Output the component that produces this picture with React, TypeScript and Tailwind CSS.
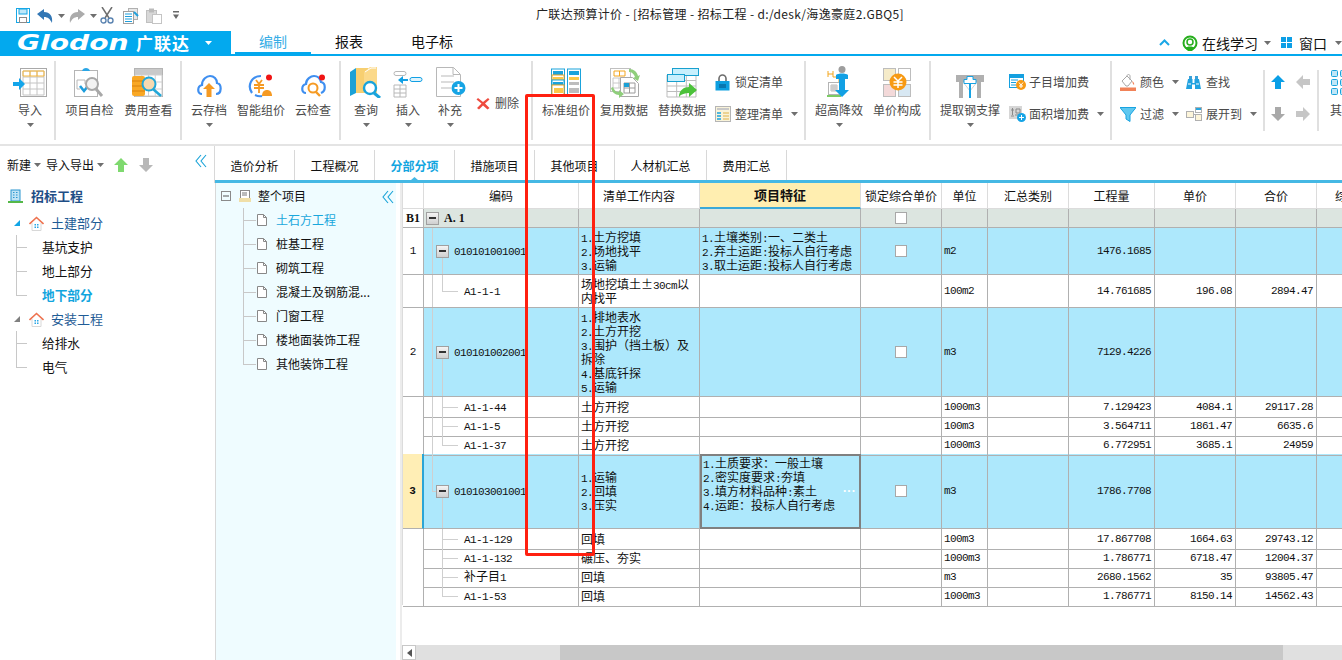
import type { ReactNode } from "react";

function Caret({ color = "#6f6f6f" }: { color?: string }) {
  return (
    <svg width="7" height="4" viewBox="0 0 7 4" className="shrink-0">
      <path d="M0 0h7L3.5 4z" fill={color} />
    </svg>
  );
}

function Icon({ w, h, children }: { w: number; h: number; children: ReactNode }) {
  return (
    <svg width={w} height={h} viewBox={`0 0 ${w} ${h}`} className="shrink-0" fill="none">
      {children}
    </svg>
  );
}

function GridLines({ x, y, w, h, nx, ny, color = "#b4b4b4" }: { x: number; y: number; w: number; h: number; nx: number; ny: number; color?: string }) {
  const v = Array.from({ length: nx + 1 }, (_, i) => x + (w * i) / nx);
  const t = Array.from({ length: ny + 1 }, (_, i) => y + (h * i) / ny);
  return (
    <g stroke={color} strokeWidth="1">
      {v.map((a) => <path key={"v" + a} d={`M${a} ${y}V${y + h}`} />)}
      {t.map((a) => <path key={"h" + a} d={`M${x} ${a}H${x + w}`} />)}
    </g>
  );
}

function Arrow({ dir, color }: { dir: "up" | "down" | "left" | "right"; color: string }) {
  const rot = { up: 0, right: 90, down: 180, left: 270 }[dir];
  return (
    <svg width="16" height="16" viewBox="0 0 16 16" className="shrink-0">
      <path d="M8 1l7 7h-4v7H5V8H1z" fill={color} transform={`rotate(${rot} 8 8)`} />
    </svg>
  );
}

const icons = {
  importFile: (
    <Icon w={34} h={31}>
      <rect x="7.5" y="1.5" width="26" height="28" fill="#fff" stroke="#a9a9a9" />
      <GridLines x={10} y={4} w={21} h={24} nx={3} ny={4} color="#c4c4c4" />
      <GridLines x={10} y={4} w={21} h={5} nx={3} ny={1} color="#f6b73c" />
      <path d="M0 15h6v-4l6 6-6 6v-4H0z" fill="#13a5ea" />
    </Icon>
  ),
  check: (
    <Icon w={33} h={31}>
      <rect x="1.5" y="3.5" width="23" height="26" stroke="#b5b5b5" fill="#fff" />
      <path d="M9 4c1-4 7-4 8 0z" fill="#2aa6e6" />
      <path d="M4 13h8v4M4 13v9h3" stroke="#b8b8b8" />
      <path d="M7 19l4 5 8-10" stroke="#1c9ddc" strokeWidth="2.6" />
      <circle cx="19" cy="17" r="6" stroke="#a8a8a8" strokeWidth="2" fill="#f2f2f2" />
      <path d="M23 22l6 7" stroke="#a8a8a8" strokeWidth="3" />
    </Icon>
  ),
  fee: (
    <Icon w={33} h={31}>
      <rect x="2.5" y="1.5" width="28" height="28" fill="#fff" stroke="#b4b4b4" />
      <rect x="3" y="2" width="27" height="6" fill="#c9c9c9" />
      <GridLines x={3} y={8} w={27} h={21} nx={4} ny={3} color="#cfcfcf" />
      <rect x="0" y="9" width="13" height="20" rx="2" fill="#f9a825" />
      <path d="M0 14h13M0 19h13M0 24h13" stroke="#d9820f" />
      <circle cx="17" cy="17" r="6.5" fill="#f6d9b0" stroke="#22a7d8" strokeWidth="2" />
      <path d="M21 22l8 7" stroke="#22a7d8" strokeWidth="2.5" />
    </Icon>
  ),
  cloudUp: (
    <Icon w={26} h={24}>
      <path d="M6 20C1 20 1 12 6 11 6 5 11 2 14 2c4 0 7 3 7 7 5 1 5 11-1 11" stroke="#3f8ff0" strokeWidth="2.2" />
      <path d="M13 9l6 6h-3.5v8h-5v-8H7z" fill="#f59a23" />
    </Icon>
  ),
  smart: (
    <Icon w={26} h={24}>
      <path d="M4 19C-1 12 3 2 13 2" stroke="#3f8ff0" strokeWidth="2.2" />
      <path d="M7 21c2 1 4 2 7 1" stroke="#3f8ff0" strokeWidth="2" />
      <path d="M8 6l3 4 3-4M6 11h10M6 14h10M11 10v9" stroke="#f59a23" strokeWidth="1.8" />
      <path d="M14 22c0-4 2-6 5-6s5 2 5 6z" fill="#f59a23" />
      <circle cx="21" cy="3.5" r="3" fill="#f01414" />
    </Icon>
  ),
  cloudCheck: (
    <Icon w={26} h={24}>
      <path d="M6 19C1 19 1 11 6 10 6 5 11 2 14 2c4 0 6 2 7 6 5 1 5 9 0 11" stroke="#3f8ff0" strokeWidth="2.2" />
      <circle cx="13" cy="14" r="4.5" stroke="#f59a23" strokeWidth="2" />
      <path d="M16 18l4 4" stroke="#f59a23" strokeWidth="2.4" />
      <circle cx="22" cy="3.5" r="3" fill="#f01414" />
    </Icon>
  ),
  query: (
    <Icon w={32} h={32}>
      <path d="M0 6l6-4v25l-6 3z" fill="#1ba1d6" />
      <path d="M6 2h12v25H6z" fill="#f7cf71" />
      <path d="M14 6l6-5h7v26H14z" fill="#fbd98a" />
      <path d="M15 6l6-4h5" stroke="#fff" />
      <circle cx="20" cy="22" r="6" fill="#fff" stroke="#18a3dc" strokeWidth="2.4" />
      <path d="M24 27l6 5" stroke="#18a3dc" strokeWidth="3" />
    </Icon>
  ),
  insert: (
    <Icon w={30} h={28}>
      <rect x="1" y="1.5" width="12" height="4" rx="2" stroke="#b8b8b8" />
      <path d="M5 10l5-4v3h5v2h-5v3z" fill="#12a0e4" />
      <rect x="17" y="7.5" width="12" height="4" rx="2" stroke="#12a0e4" fill="#dff4fd" />
      <GridLines x={1} y={15} w={12} h={12} nx={2} ny={3} color="#b8b8b8" />
    </Icon>
  ),
  add: (
    <Icon w={31} h={32}>
      <path d="M1.5 1.5h17l7 7v22h-24z" fill="#fff" stroke="#b8b8b8" />
      <path d="M6 10h13M6 16h13M6 22h10" stroke="#dcdcdc" strokeWidth="2" />
      <path d="M18 1.5v7h7" stroke="#b8b8b8" />
      <circle cx="23.5" cy="22" r="7" fill="#16a4e4" />
      <path d="M23.5 18v8M19.5 22h8" stroke="#fff" strokeWidth="2" />
    </Icon>
  ),
  del: (
    <Icon w={14} h={13}>
      <path d="M2 1l5 4 5-4 1.500 1.500-4.500 4 4.500 4.500-2 1.500-4.500-4-4 4-2-1.500 4.500-4.500L.5 2.500z" fill="#ee4b3f" />
    </Icon>
  ),
  standard: (
    <Icon w={32} h={30}>
      <rect x="1.500" y="1" width="13" height="27" fill="#fff" stroke="#1aa3dc" />
      <rect x="3" y="3" width="10" height="4" fill="#1aa3dc" />
      <rect x="2" y="7" width="12" height="5" fill="#fff" stroke="#f3a61f" />
      <rect x="3" y="9" width="10" height="3" fill="#fbc94a" />
      <rect x="2" y="12" width="12" height="5" fill="#fff" stroke="#1aa3dc" />
      <rect x="3" y="14" width="10" height="3" fill="#1aa3dc" />
      <rect x="2" y="17" width="12" height="11" fill="#fff" stroke="#f3a61f" />
      <rect x="4" y="20" width="9" height="5" fill="#fbc94a" />
      <rect x="17.500" y="1" width="13" height="27" fill="#fff" stroke="#1aa3dc" />
      <rect x="19" y="3" width="10" height="4" fill="#1aa3dc" />
      <rect x="19" y="9" width="10" height="3" fill="#fbc94a" />
      <rect x="19" y="14" width="10" height="3" fill="#bdbdbd" />
      <rect x="19" y="20" width="10" height="5" fill="#bdbdbd" />
    </Icon>
  ),
  reuse: (
    <Icon w={31} h={31}>
      <rect x="1.500" y="1.500" width="20" height="23" fill="#fff" stroke="#c0c0c0" />
      <GridLines x={5} y={4} w={11} h={5} nx={2} ny={1} color="#f3a61f" />
      <GridLines x={4} y={11} w={12} h={10} nx={2} ny={2} color="#c8c8c8" />
      <path d="M11.500 10.500h12l6 6v13h-18z" fill="#fff" stroke="#a8a8a8" />
      <GridLines x={15} y={16} w={11} h={10} nx={2} ny={2} color="#9a9a9a" />
      <rect x="15" y="16" width="5" height="4" fill="#1ba1d6" />
      <path d="M20 2c5 0 8 3 9 7l2-1-2 6-5-3 2-1c-1-3-3-5-6-5z" fill="#8fce7b" />
      <path d="M2 21c1 4 4 7 8 7v3l5-4-5-4v2c-3 0-5-2-6-5z" fill="#8fce7b" />
    </Icon>
  ),
  replace: (
    <Icon w={33} h={31}>
      <GridLines x={1} y={8} w={29} h={22} nx={3} ny={4} color="#bdbdbd" />
      <rect x="6.500" y="1.500" width="26" height="7" fill="#c8f0fd" stroke="#18a0cf" />
      <rect x="1.500" y="7.500" width="17" height="7" fill="#c8f0fd" stroke="#18a0cf" />
      <path d="M13 30c0-7 5-10 10-10v-4l8 7-8 7v-4c-4 0-8 1-10 4z" fill="#4cc23a" />
    </Icon>
  ),
  lock: (
    <Icon w={15} h={17}>
      <path d="M4 7V4.500a3.500 3.500 0 0 1 7 0V7" stroke="#6d6d6d" strokeWidth="1.600" />
      <rect x="0.500" y="7" width="14" height="9.500" fill="#0d9fe0" />
      <path d="M4 11h7M4 13h7" stroke="#074f80" />
    </Icon>
  ),
  arrange: (
    <Icon w={16} h={16}>
      <rect x="0.500" y="0.500" width="15" height="15" fill="#f9f3d9" stroke="#b5b5b5" />
      <path d="M2 3h12" stroke="#c8c8c8" strokeWidth="2" />
      <path d="M2 7h4M2 10h4M2 13h4" stroke="#19a3e0" strokeWidth="1.500" />
      <path d="M8 7h6M8 10h6M8 13h6" stroke="#e8c97a" strokeWidth="1.500" />
    </Icon>
  ),
  raise: (
    <Icon w={24} h={32}>
      <path d="M1 5v6M1 8h5M6 5v6" stroke="#f3a61f" />
      <path d="M6 11h6v20" stroke="#f3a61f" />
      <rect x="1.500" y="16.500" width="11" height="12" fill="#fff" stroke="#b4b4b4" />
      <GridLines x={4} y={19} w={6} h={6} nx={3} ny={3} color="#bbb" />
      <rect x="0" y="29" width="14" height="2" fill="#7ccb65" />
      <circle cx="15" cy="3.500" r="3.500" fill="#9d9d9d" />
      <path d="M9 9c2-2 10-2 12 0v4h-3v4h-6v-4H9z" fill="#12a0e4" />
      <path d="M12 17h6v7h4l-7 7-7-7h4z" fill="#12a0e4" />
    </Icon>
  ),
  unit: (
    <Icon w={31} h={31}>
      <rect x="1.500" y="1.500" width="12" height="12" fill="#f5ebc9" stroke="#bdbdbd" />
      <rect x="16.500" y="1.500" width="12" height="12" fill="#fff" stroke="#bdbdbd" />
      <rect x="1.500" y="17.500" width="12" height="12" fill="#f3d9d9" stroke="#bdbdbd" />
      <rect x="16.500" y="17.500" width="12" height="12" fill="#d8e8f3" stroke="#bdbdbd" />
      <circle cx="16" cy="15" r="8.500" fill="#f79a14" />
      <path d="M12 10l4 4 4-4M11.500 15h9M11.500 18h9M16 14v7" stroke="#fff" strokeWidth="1.500" />
    </Icon>
  ),
  steel: (
    <Icon w={28} h={23}>
      <path d="M0 0h28v7h-3v16h-4V7h-3zM0 0h10v7H7v16H3V7H0z" fill="#b0b0b0" />
      <rect x="7" y="0" width="14" height="7" fill="#b0b0b0" />
      <path d="M7 7l7 9 7-9" stroke="#d4d4d4" />
      <path d="M14 8v15" stroke="#17a3e4" strokeWidth="2" />
      <path d="M11 1.500h6v3h3v4H8v-4h3z" fill="#fff" stroke="#17a3e4" />
    </Icon>
  ),
  subFee: (
    <Icon w={17} h={16}>
      <rect x="0.500" y="0.500" width="14" height="13" fill="#fff" stroke="#14a0e0" />
      <rect x="1" y="1" width="13" height="3" fill="#14a0e0" />
      <path d="M2 6h7M2 8.500h5M2 11h5" stroke="#14a0e0" />
      <circle cx="12" cy="11" r="5" fill="#f79a14" />
      <path d="M10 8.500l2 2.500 2-2.500M10 12h4M12 11v3" stroke="#fff" />
    </Icon>
  ),
  areaFee: (
    <Icon w={17} h={16}>
      <rect x="0" y="0" width="13" height="13" fill="#d6d6d6" />
      <path d="M2 4h3M3.500 2v7M2 10h3M7 3h4v4H7zM6 9h6" stroke="#8a8a8a" />
      <circle cx="12.500" cy="11.500" r="4.500" fill="#15a4e6" />
      <path d="M12.500 9v5M10 11.500h5" stroke="#fff" />
    </Icon>
  ),
  paint: (
    <Icon w={16} h={17}>
      <path d="M2 7l5-5 5 5-4 5H6z" fill="#fff" stroke="#a8a8a8" />
      <path d="M7 2c0-2 3-2 3 0v4" stroke="#a8a8a8" />
      <path d="M12 7c2 1 2.500 3 2 4l-1-1z" fill="#f18258" />
      <rect x="0" y="13.500" width="16" height="3.500" fill="#f18258" />
    </Icon>
  ),
  binoculars: (
    <Icon w={15} h={15}>
      <path d="M3 1h3v3H3zM9 1h3v3H9z" fill="#3aa0d8" />
      <path d="M2 4h4.500v4h2V4H13l2 10H9V9.500H6V14H0z" fill="#21a2e0" />
      <path d="M2 9h3M10 9h3" stroke="#fff" />
    </Icon>
  ),
  filter: (
    <Icon w={16} h={15}>
      <path d="M0 .5h16L10 8v6.500l-4-2.500V8z" fill="#5ec8f0" stroke="#18a3e0" />
    </Icon>
  ),
  expand: (
    <Icon w={16} h={15}>
      <rect x="0.500" y="4.500" width="7" height="6" fill="#fdf5da" stroke="#b0b0b0" />
      <rect x="9.500" y="0.500" width="6" height="5" fill="#fff" stroke="#b0b0b0" />
      <rect x="10" y="1" width="5" height="2" fill="#25a7e0" />
      <rect x="9.500" y="7.500" width="6" height="6" fill="#fdf5da" stroke="#b0b0b0" />
      <path d="M7.500 7.500h2" stroke="#b0b0b0" />
    </Icon>
  ),
  others: (
    <Icon w={30} h={26}>
      {[1, 10, 19].map((y) =>
        [1, 10, 19].map((x) => (
          <rect key={x + "-" + y} x={x + 0.5} y={y + 0.5} width="6" height="6" rx="1" fill="#bfe6f7" stroke="#19a3dc" />
        )),
      )}
    </Icon>
  ),
};

function LargeBtn({ label, icon, w, caret }: { label: string; icon: ReactNode; w: string; caret?: boolean }) {
  return (
    <div className={`flex flex-col items-center shrink-0 ${w}`}>
      <div className="h-[34px] flex items-end justify-center">{icon}</div>
      <div className="mt-[5px] text-[12px] leading-[14px] whitespace-nowrap text-[#4a4a4a]">{label}</div>
      {caret && <div className="mt-[6px] flex"><Caret /></div>}
    </div>
  );
}

function SmallBtn({ label, icon, caret, iconW }: { label: string; icon: ReactNode; caret?: boolean; iconW: string }) {
  return (
    <div className="flex items-center h-[18px]">
      <div className={`flex items-center justify-start shrink-0 ${iconW}`}>{icon}</div>
      <div className="text-[12px] leading-[14px] whitespace-nowrap text-[#4a4a4a]">{label}</div>
      {caret && <div className="ml-[8px] flex"><Caret /></div>}
    </div>
  );
}

function Group({ className, children }: { className: string; children: ReactNode }) {
  return (
    <div className={`h-[79px] mt-[5px] flex shrink-0 border-r-2 border-[#e0e0e0] ${className}`}>
      {children}
    </div>
  );
}

function Ribbon() {
  return (
    <div className="h-[90px] flex overflow-hidden border-b-2 border-[#e4e4e4] shrink-0">
      <Group className="w-[56px] pt-[3px]">
        <LargeBtn label="导入" icon={icons.importFile} w="w-[60px]" caret />
      </Group>
      <Group className="w-[126px] pt-[3px] pl-[4px]">
        <LargeBtn label="项目自检" icon={icons.check} w="w-[59px]" />
        <LargeBtn label="费用查看" icon={icons.fee} w="w-[59px]" />
      </Group>
      <Group className="w-[159px] pt-[3px] pl-[1px]">
        <LargeBtn label="云存档" icon={icons.cloudUp} w="w-[52px]" caret />
        <LargeBtn label="智能组价" icon={icons.smart} w="w-[52px]" />
        <LargeBtn label="云检查" icon={icons.cloudCheck} w="w-[52px]" />
      </Group>
      <Group className="w-[192px] pt-[3px] pl-[4px]">
        <LargeBtn label="查询" icon={icons.query} w="w-[42px]" caret />
        <LargeBtn label="插入" icon={icons.insert} w="w-[42px]" caret />
        <LargeBtn label="补充" icon={icons.add} w="w-[42px]" caret />
        <div className="flex items-center gap-[5px] h-[18px] mt-[30px] ml-[5px]">
          {icons.del}
          <span className="text-[12px] leading-[14px] text-[#4a4a4a] whitespace-nowrap">删除</span>
        </div>
      </Group>
      <Group className="w-[273px] pt-[3px] pl-[4px]">
        <LargeBtn label="标准组价" icon={icons.standard} w="w-[58px]" />
        <LargeBtn label="复用数据" icon={icons.reuse} w="w-[58px]" />
        <LargeBtn label="替换数据" icon={icons.replace} w="w-[58px]" />
        <div className="flex flex-col gap-[14px] ml-[4px] pt-[9px]">
          <SmallBtn label="锁定清单" icon={icons.lock} iconW="w-[20px]" />
          <SmallBtn label="整理清单" icon={icons.arrange} iconW="w-[20px]" caret />
        </div>
      </Group>
      <Group className="w-[125px] pt-[3px] pl-[4px]">
        <LargeBtn label="超高降效" icon={icons.raise} w="w-[58px]" caret />
        <LargeBtn label="单价构成" icon={icons.unit} w="w-[58px]" />
      </Group>
      <Group className="w-[181px] pt-[3px] pl-[6px]">
        <LargeBtn label="提取钢支撑" icon={icons.steel} w="w-[66px]" caret />
        <div className="flex flex-col gap-[14px] ml-[6px] pt-[9px]">
          <SmallBtn label="子目增加费" icon={icons.subFee} iconW="w-[20px]" />
          <SmallBtn label="面积增加费" icon={icons.areaFee} iconW="w-[20px]" caret />
        </div>
      </Group>
      <div className="w-[151px] h-[79px] mt-[5px] shrink-0 flex flex-col gap-[14px] pl-[8px] pt-[12px]">
        <div className="flex">
          <div className="w-[66px]"><SmallBtn label="颜色" icon={icons.paint} iconW="w-[20px]" caret /></div>
          <SmallBtn label="查找" icon={icons.binoculars} iconW="w-[20px]" />
        </div>
        <div className="flex">
          <div className="w-[66px]"><SmallBtn label="过滤" icon={icons.filter} iconW="w-[20px]" caret /></div>
          <SmallBtn label="展开到" icon={icons.expand} iconW="w-[20px]" caret />
        </div>
      </div>
      <div className="w-[56px] h-[61px] mt-[14px] shrink-0 border-l-2 border-r-2 border-[#e0e0e0] grid grid-cols-[16px_16px] content-start gap-x-[9px] gap-y-[16px] pl-[5px] pt-[4px]">
        <Arrow dir="up" color="#0a9fe6" />
        <Arrow dir="left" color="#c6c6c6" />
        <Arrow dir="down" color="#a9a9a9" />
        <Arrow dir="right" color="#c6c6c6" />
      </div>
      <div className="shrink-0 pl-[11px] pt-[13px] flex flex-col">
        {icons.others}
        <div className="mt-[8px] text-[12px] leading-[14px] text-[#4a4a4a] whitespace-nowrap">其他</div>
      </div>
    </div>
  );
}

function TitleBar() {
  return (
    <div className="h-[31px] flex items-center shrink-0">
      <div className="w-[536px] shrink-0 flex items-center pl-[16px] h-full">
        <svg width="14" height="15" viewBox="0 0 14 15" className="shrink-0" fill="none">
          <rect x="0.500" y="0.500" width="13" height="14" stroke="#17a7e6" />
          <rect x="3" y="1" width="8" height="5" fill="#bfe8f9" stroke="#17a7e6" />
          <rect x="3.500" y="9.500" width="7" height="5" stroke="#8a8a8a" />
        </svg>
        <svg width="16" height="14" viewBox="0 0 16 14" className="ml-[7px] shrink-0">
          <path d="M0 5l7-5v3c6 0 9 4 8 11-2-4-4-6-8-6v3z" fill="#3277b5" />
        </svg>
        <div className="ml-[5px]"><Caret /></div>
        <svg width="16" height="14" viewBox="0 0 16 14" className="ml-[4px] shrink-0">
          <path d="M16 5L9 0v3C3 3 0 7 1 14c2-4 4-6 8-6v3z" fill="#ababab" />
        </svg>
        <div className="ml-[5px]"><Caret /></div>
        <svg width="14" height="17" viewBox="0 0 14 17" className="ml-[3px] shrink-0" fill="none">
          <path d="M2 0l7 11M12 0L5 11" stroke="#6f6f6f" strokeWidth="1.500" />
          <circle cx="3.500" cy="13.500" r="2.500" stroke="#5b84b1" strokeWidth="1.400" />
          <circle cx="10.500" cy="13.500" r="2.500" stroke="#5b84b1" strokeWidth="1.400" />
        </svg>
        <svg width="16" height="16" viewBox="0 0 16 16" className="ml-[9px] shrink-0" fill="none">
          <rect x="5.500" y="0.500" width="9" height="11" fill="#e8e8e8" stroke="#b0b0b0" />
          <rect x="0.500" y="3.500" width="10" height="12" fill="#fff" stroke="#a0a0a0" />
          <path d="M2 6h7M2 8.500h7M2 11h7M2 13.500h7" stroke="#1e9fdc" />
          <path d="M11 4l4 4" stroke="#1e9fdc" strokeWidth="2" />
        </svg>
        <svg width="16" height="16" viewBox="0 0 16 16" className="ml-[7px] shrink-0" fill="none">
          <rect x="0.500" y="2.500" width="10" height="12" fill="#d8d8d8" stroke="#c0c0c0" />
          <rect x="3" y="0.500" width="5" height="4" fill="#bbb" />
          <rect x="6.500" y="6.500" width="9" height="9" fill="#fff" stroke="#c4c4c4" />
        </svg>
        <svg width="6" height="9" viewBox="0 0 6 9" className="ml-[11px] shrink-0">
          <path d="M0 0h6v1.500H0zM0 3.500h6L3 8z" fill="#6a6a6a" />
        </svg>
      </div>
      <div className="text-[12px] leading-[14px] whitespace-nowrap text-[#222] -mt-[3px] tracking-[0.35px]">
        广联达预算计价 - [招标管理 - 招标工程 - d:/desk/海逸豪庭2.GBQ5]
      </div>
    </div>
  );
}

function MenuBar() {
  return (
    <div className="h-[25px] flex shrink-0 border-b-2 border-[#03a9ee]">
      <div className="w-[231px] h-[24px] shrink-0 flex items-center bg-[#03a9ee] pl-[17px] text-white">
        <span className="w-[119px] shrink-0">
          <span className="inline-block origin-left scale-x-[1.28] [font-family:'DejaVu_Sans',sans-serif] italic font-bold text-[22px] leading-[24px]">Glodon</span>
        </span>
        <span className="text-[17px] leading-[24px] font-bold w-[69px] tracking-[1px] whitespace-nowrap">广联达</span>
        <Caret color="#ffffff" />
      </div>
      <div className="ml-[4px] w-[76px] h-[23px] border-b-[2px] border-[#03a9ee] text-center text-[14px] leading-[21px] text-[#36ade6]">编制</div>
      <div className="w-[76px] h-[23px] text-center text-[14px] leading-[21px] text-[#111]">报表</div>
      <div className="w-[90px] h-[23px] text-center text-[14px] leading-[21px] text-[#111]">电子标</div>
      <div className="ml-auto flex items-center h-[23px]">
        <svg width="11" height="7" viewBox="0 0 11 7" fill="none"><path d="M1 6l4.500-4.500L10 6" stroke="#1aa7e6" strokeWidth="2" /></svg>
        <svg width="16" height="16" viewBox="0 0 16 16" className="ml-[12px]" fill="none">
          <circle cx="8" cy="8" r="6.500" stroke="#27ae1d" strokeWidth="2" />
          <circle cx="8" cy="7" r="3" stroke="#27ae1d" strokeWidth="1.500" />
          <path d="M3 13c2-2 8-2 10 0l-3 3H6z" fill="#27ae1d" />
        </svg>
        <span className="ml-[4px] text-[14px] leading-[16px] text-[#111] whitespace-nowrap w-[62px]">在线学习</span>
        <Caret />
        <svg width="11" height="11" viewBox="0 0 11 11" className="ml-[10px]">
          <path d="M0 0h5v5H0zM6 0h5v5H6zM0 6h5v5H0zM6 6h5v5H6z" fill="#0d9fe6" />
        </svg>
        <span className="ml-[7px] text-[14px] leading-[16px] text-[#111] whitespace-nowrap w-[36px]">窗口</span>
        <Caret />
      </div>
    </div>
  );
}

function CollapseIcon({ color = "#18a3d8" }: { color?: string }) {
  return (
    <svg width="12" height="14" viewBox="0 0 12 14" fill="none">
      <path d="M6 1L1 7l5 6M11 1L6 7l5 6" stroke={color} strokeWidth="1.100" />
    </svg>
  );
}

const tabs = [
  { name: "造价分析", w: "w-[80px]" },
  { name: "工程概况", w: "w-[80px]" },
  { name: "分部分项", w: "w-[80px]", active: true },
  { name: "措施项目", w: "w-[80px]" },
  { name: "其他项目", w: "w-[80px]" },
  { name: "人材机汇总", w: "w-[92px]" },
  { name: "费用汇总", w: "w-[80px]" },
];

function TabBar() {
  return (
    <div className="h-[37px] flex shrink-0 border-b-[3px] border-[#45b8e4]">
      <div className="w-[215px] shrink-0 flex items-center pl-[7px] text-[12px] text-[#111] border-r border-[#d8d8d8] -mb-[3px] bg-white">
        <span>新建</span>
        <span className="ml-[3px]"><Caret /></span>
        <span className="ml-[5px]">导入导出</span>
        <span className="ml-[3px]"><Caret /></span>
        <span className="ml-[9px]"><Arrow dir="up" color="#7fd96f" /></span>
        <span className="ml-[9px]"><Arrow dir="down" color="#b8b8b8" /></span>
        <span className="ml-auto mr-[7px] -mt-[7px]"><CollapseIcon /></span>
      </div>
      {tabs.map((t) => (
        <div
          key={t.name}
          className={`${t.w} shrink-0 relative mt-[4px] pt-[9px] text-center text-[12px] leading-[14px] border-r border-[#d8d8d8] ${t.active ? "font-bold text-[#12a5e0]" : "text-[#111]"}`}
        >
          {t.name}
          {t.active && (
            <span className="absolute left-[36px] bottom-0 flex">
              <svg width="7" height="3" viewBox="0 0 7 3"><path d="M0 3l3.500-3L7 3z" fill="#45b8e4" /></svg>
            </span>
          )}
        </div>
      ))}
    </div>
  );
}

function House() {
  return (
    <svg width="15" height="15" viewBox="0 0 15 15" fill="none" className="shrink-0">
      <path d="M3 7v7.500h9V7" fill="#fff" stroke="#d8d8d8" />
      <path d="M.5 8L7.500 1.500 14.500 8" stroke="#ee7350" strokeWidth="1.600" />
      <path d="M5.500 8h1.500v1.500H5.500zM8 8h1.500v1.500H8zM5.500 10.500h1.500V12H5.500zM8 10.500h1.500V12H8z" fill="#2aa7e6" />
    </svg>
  );
}

function LeftLeaf({ label, last, active }: { label: string; last?: boolean; active?: boolean }) {
  return (
    <div className="relative h-[24px] flex items-center pl-[42px]">
      <span className={`absolute left-[16px] top-0 w-px bg-[#c8c8c8] ${last ? "h-[12px]" : "h-[24px]"}`} />
      <span className="absolute left-[16px] top-[12px] w-[11px] h-px bg-[#c8c8c8]" />
      <span className={`text-[12.700px] leading-[16px] ${active ? "font-bold text-[#12a5de]" : "text-[#111]"}`}>{label}</span>
    </div>
  );
}

function LeftGroup({ label, open }: { label: string; open?: boolean }) {
  return (
    <div className="h-[24px] flex items-center pl-[14px]">
      <svg width="6" height="6" viewBox="0 0 6 6" className="shrink-0"><path d="M6 0v6H0z" fill={open ? "#12a5e6" : "#808080"} /></svg>
      <span className="ml-[9px]"><House /></span>
      <span className="ml-[7px] text-[13px] leading-[16px] text-[#1f5c96]">{label}</span>
    </div>
  );
}

function LeftPanel() {
  return (
    <div className="w-[216px] shrink-0 border-r border-[#d8d8d8]">
      <div className="h-[24px] flex items-center pl-[8px] mt-px">
        <svg width="15" height="14" viewBox="0 0 15 14" className="shrink-0">
          <rect x="3" y="1" width="9" height="11" fill="#bfe3f5" stroke="#2b96d0" />
          <path d="M5 3.500h1.500M8 3.500h1.500M5 6h1.500M8 6h1.500M5 8.500h1.500M8 8.500h1.500" stroke="#2b96d0" />
          <rect x="0" y="12" width="15" height="2" fill="#55b848" />
        </svg>
        <span className="ml-[8px] text-[13px] leading-[16px] font-bold text-[#1f4e86]">招标工程</span>
      </div>
      <div className="h-[3px]" />
      <LeftGroup label="土建部分" open />
      <LeftLeaf label="基坑支护" />
      <LeftLeaf label="地上部分" />
      <LeftLeaf label="地下部分" last active />
      <LeftGroup label="安装工程" />
      <LeftLeaf label="给排水" />
      <LeftLeaf label="电气" last />
    </div>
  );
}

const sections = ["土石方工程", "桩基工程", "砌筑工程", "混凝土及钢筋混...", "门窗工程", "楼地面装饰工程", "其他装饰工程"];

function MidPanel() {
  return (
    <div className="w-[184px] shrink-0 relative">
      <div className="w-[180px] h-full bg-[#effcff] pt-px">
        <div className="h-[24px] flex items-center pl-[5px]">
          <svg width="10" height="10" viewBox="0 0 10 10" fill="none" className="shrink-0">
            <rect x="0.500" y="0.500" width="9" height="9" stroke="#8a8a8a" />
            <path d="M2 5h6" stroke="#555" />
          </svg>
          <svg width="12" height="12" viewBox="0 0 12 12" fill="none" className="ml-[8px] shrink-0">
            <rect x="1.500" y="0.500" width="9" height="9" fill="#fff" stroke="#8a8a8a" />
            <path d="M3 3h5M3 5h5" stroke="#777" />
            <rect x="0" y="8" width="12" height="4" fill="#f0dfa8" />
          </svg>
          <span className="ml-[7px] text-[12px] leading-[14px] text-[#111]">整个项目</span>
        </div>
        {sections.map((name, i) => (
          <div key={name} className="relative h-[24px] flex items-center pl-[60px]">
            <span className={`absolute left-[27px] top-0 w-px bg-[#c8c8c8] ${i === sections.length - 1 ? "h-[12px]" : "h-[24px]"}`} />
            <span className="absolute left-[27px] top-[12px] w-[13px] h-px bg-[#c8c8c8]" />
            <svg width="10" height="12" viewBox="0 0 10 12" fill="none" className="absolute left-[41px] top-[6px]">
              <path d="M.5.500h6l3 3v8h-9z" fill="#fff" stroke="#888" />
              <path d="M6.500.500v3h3" stroke="#888" />
            </svg>
            <span className={`text-[12px] leading-[14px] whitespace-nowrap ${i === 0 ? "text-[#1aa7dc]" : "text-[#111]"}`}>{name}</span>
          </div>
        ))}
      </div>
      <span className="absolute right-[6px] top-[7px] flex"><CollapseIcon /></span>
    </div>
  );
}

const gridCols = "grid grid-cols-[21px_155px_121px_161px_81px_46px_81px_86px_81px_81px_81px]";
const cellLine = "border-r border-b border-[#b0b0b0]";
const headLine = "border-r border-[#dcdcdc] border-b border-b-[#dcdcdc]";
const headers = ["", "编码", "清单工作内容", "项目特征", "锁定综合单价", "单位", "汇总类别", "工程量", "单价", "合价"];

// ASCII runs are half width in the reference, so they get a narrow mono face next to the 12px CJK glyphs
function Txt({ s }: { s: string }) {
  const parts = s.split(/([\x21-\x7e ]+)/);
  return (
    <>
      {parts.map((p, i) =>
        i % 2 === 1 ? (
          <span key={i} className="[font-family:'Liberation_Mono',monospace] text-[11px] tracking-[-0.6px]">{p}</span>
        ) : (
          <span key={i}>{p}</span>
        ),
      )}
    </>
  );
}

function Lines({ items }: { items: string[] }) {
  return (
    <div className="leading-[14px] whitespace-nowrap">
      {items.map((l) => (
        <div key={l} className="h-[14px]"><Txt s={l} /></div>
      ))}
    </div>
  );
}

type Row = {
  h: string;
  kind: "parent" | "child";
  no?: string;
  code: string;
  work: string[];
  feature?: string[];
  unit: string;
  qty: string;
  price?: string;
  total?: string;
  outer?: "full" | "half" | "none";
  inner?: "full" | "half";
  selected?: boolean;
};

const rows: Row[] = [
  { h: "h-[47px]", kind: "parent", no: "1", code: "010101001001", work: ["1.土方挖填", "2.场地找平", "3.运输"], feature: ["1.土壤类别:一、二类土", "2.弃土运距:投标人自行考虑", "3.取土运距:投标人自行考虑"], unit: "m2", qty: "1476.1685", outer: "full" },
  { h: "h-[33px]", kind: "child", code: "A1-1-1", work: ["场地挖填土±30cm以", "内找平"], unit: "100m2", qty: "14.761685", price: "196.08", total: "2894.47", outer: "full", inner: "half" },
  { h: "h-[89px]", kind: "parent", no: "2", code: "010101002001", work: ["1.排地表水", "2.土方开挖", "3.围护（挡土板）及", "拆除", "4.基底钎探", "5.运输"], unit: "m3", qty: "7129.4226", outer: "full" },
  { h: "h-[19px]", kind: "child", code: "A1-1-44", work: ["土方开挖"], unit: "1000m3", qty: "7.129423", price: "4084.1", total: "29117.28", outer: "full", inner: "full" },
  { h: "h-[19px]", kind: "child", code: "A1-1-5", work: ["土方开挖"], unit: "100m3", qty: "3.564711", price: "1861.47", total: "6635.6", outer: "full", inner: "full" },
  { h: "h-[19px]", kind: "child", code: "A1-1-37", work: ["土方开挖"], unit: "1000m3", qty: "6.772951", price: "3685.1", total: "24959", outer: "full", inner: "half" },
  { h: "h-[75px]", kind: "parent", no: "3", code: "010103001001", work: ["1.运输", "2.回填", "3.压实"], feature: ["1.土质要求：一般土壤", "2.密实度要求:夯填", "3.填方材料品种:素土", "4.运距：投标人自行考虑"], unit: "m3", qty: "1786.7708", outer: "half", selected: true },
  { h: "h-[19px]", kind: "child", code: "A1-1-129", work: ["回填"], unit: "100m3", qty: "17.867708", price: "1664.63", total: "29743.12", outer: "none", inner: "full" },
  { h: "h-[19px]", kind: "child", code: "A1-1-132", work: ["碾压、夯实"], unit: "1000m3", qty: "1.786771", price: "6718.47", total: "12004.37", outer: "none", inner: "full" },
  { h: "h-[19px]", kind: "child", code: "补子目1", work: ["回填"], unit: "m3", qty: "2680.1562", price: "35", total: "93805.47", outer: "none", inner: "full" },
  { h: "h-[19px]", kind: "child", code: "A1-1-53", work: ["回填"], unit: "1000m3", qty: "1.786771", price: "8150.14", total: "14562.43", outer: "none", inner: "half" },
];

function Check() {
  return <span className="block w-[12px] h-[12px] bg-white border border-[#a8a8a8]" />;
}

function MinusBox() {
  return (
    <span className="relative z-10 flex items-center justify-center w-[13px] h-[13px] border border-[#a0a0a0] bg-gradient-to-b from-[#f4f4f4] to-[#d0d0d0]">
      <span className="w-[7px] h-[2px] bg-[#333]" />
    </span>
  );
}

function CodeCell({ row }: { row: Row }) {
  const lineH = "absolute w-px bg-[#cfcfcf]";
  return (
    <div className={`relative flex items-center whitespace-nowrap ${cellLine}`}>
      {row.outer === "full" && <span className={`${lineH} left-[8px] top-0 bottom-0`} />}
      {row.outer === "half" && (
        <>
          <span className={`${lineH} left-[8px] top-0 h-1/2`} />
          <span className="absolute left-[8px] top-1/2 w-[5px] h-px bg-[#cfcfcf]" />
        </>
      )}
      {row.kind === "parent" ? (
        <>
          <span className={`${lineH} left-[18px] top-1/2 bottom-0`} />
          <span className="ml-[12px]"><MinusBox /></span>
          <span className="ml-[5px]"><Txt s={row.code} /></span>
        </>
      ) : (
        <>
          <span className={`${lineH} left-[18px] top-0 ${row.inner === "half" ? "h-1/2" : "bottom-0"}`} />
          <span className="absolute left-[18px] top-1/2 w-[16px] h-px bg-[#cfcfcf]" />
          <span className="ml-[40px]"><Txt s={row.code} /></span>
        </>
      )}
    </div>
  );
}

function NumCell({ v }: { v?: string }) {
  return (
    <div className={`flex items-center justify-end pr-[3px] ${cellLine}`}>
      {v && <Txt s={v} />}
    </div>
  );
}

function DataRow({ row }: { row: Row }) {
  const parent = row.kind === "parent";
  return (
    <div className={`${gridCols} ${row.h} ${parent ? "bg-[#ade8fc]" : "bg-white"}`}>
      <div className={`flex items-center justify-center ${cellLine} ${row.selected ? "bg-[#ffeeb5] font-bold border-r-2 border-r-[#2ba5d6]" : "bg-white"}`}>
        {row.no && <span className="[font-family:'Liberation_Mono',monospace] text-[11px]">{row.no}</span>}
      </div>
      <CodeCell row={row} />
      <div className={`flex items-center pl-[2px] ${cellLine}`}><Lines items={row.work} /></div>
      {row.selected ? (
        <div className="relative border-2 border-[#808080] pl-px">
          <Lines items={row.feature ?? []} />
          <span className="absolute right-[3px] top-[25px] [font-family:'Liberation_Sans',sans-serif] font-bold text-[12px] leading-[14px] text-white tracking-[1px]">...</span>
        </div>
      ) : (
        <div className={`flex items-center pl-[2px] ${cellLine}`}>{row.feature && <Lines items={row.feature} />}</div>
      )}
      <div className={`flex items-center justify-center ${cellLine}`}>{parent && <Check />}</div>
      <div className={`flex items-center pl-[2px] ${cellLine}`}><Txt s={row.unit} /></div>
      <div className={cellLine} />
      <NumCell v={row.qty} />
      <NumCell v={row.price} />
      <NumCell v={row.total} />
      <div className={cellLine} />
    </div>
  );
}

function Sheet() {
  return (
    <div className="flex-1 min-w-0 overflow-hidden flex flex-col border-l-2 border-[#ececec]">
      <div className="flex-1 min-h-0 overflow-hidden">
        <div className="w-[1000px] border-l border-[#dcdcdc] text-[12px] text-[#111]">
          <div className={`${gridCols} h-[26px]`}>
            {headers.map((h) => (
              <div
                key={h || "corner"}
                className={
                  h === "项目特征"
                    ? "flex items-center justify-center bg-[#ffeeb0] font-bold text-[13px] border-b-2 border-[#3ba9d8] border-r border-r-[#dcdcdc]"
                    : `flex items-center justify-center whitespace-nowrap ${headLine}`
                }
              >
                {h}
              </div>
            ))}
            <div className={`flex items-center pl-[18px] whitespace-nowrap ${headLine}`}>综合单价</div>
          </div>
          <div className={`${gridCols} h-[19px] bg-[#dce5e0]`}>
            <div className={`flex items-center justify-center font-bold [font-family:'Liberation_Serif',serif] bg-white ${cellLine}`}>B1</div>
            <div className={`flex items-center pl-[2px] ${cellLine}`}>
              <MinusBox />
              <span className="ml-[5px] font-bold [font-family:'Liberation_Serif',serif]">A. 1</span>
            </div>
            <div className={cellLine} />
            <div className={cellLine} />
            <div className={`flex items-center justify-center ${cellLine}`}><Check /></div>
            <div className={cellLine} />
            <div className={cellLine} />
            <div className={cellLine} />
            <div className={cellLine} />
            <div className={cellLine} />
            <div className={cellLine} />
          </div>
          {rows.map((r) => <DataRow key={r.code} row={r} />)}
        </div>
      </div>
      <div className="h-[15px] shrink-0 flex bg-[#e0e0e0]">
        <div className="w-[14px] shrink-0 bg-white border border-[#c8c8c8] flex items-center justify-center">
          <svg width="5" height="8" viewBox="0 0 5 8"><path d="M5 0v8L0 4z" fill="#555" /></svg>
        </div>
        <div className="w-[144px] shrink-0" />
        <div className="w-[723px] shrink-0 bg-[#c8c8c8]" />
      </div>
    </div>
  );
}

export default function App() {
  return (
    <div className="relative w-[1342px] h-[660px] overflow-hidden bg-white flex flex-col [font-family:'Noto_Sans_CJK_SC',sans-serif]">
      <TitleBar />
      <MenuBar />
      <Ribbon />
      <TabBar />
      <div className="flex-1 min-h-0 flex">
        <LeftPanel />
        <MidPanel />
        <Sheet />
      </div>
      {/* red annotation drawn over the screenshot */}
      <div className="absolute left-[525px] top-[94px] w-[70px] h-[462px] border-[3px] border-[#ff2010] rounded-[2px] pointer-events-none" />
    </div>
  );
}
